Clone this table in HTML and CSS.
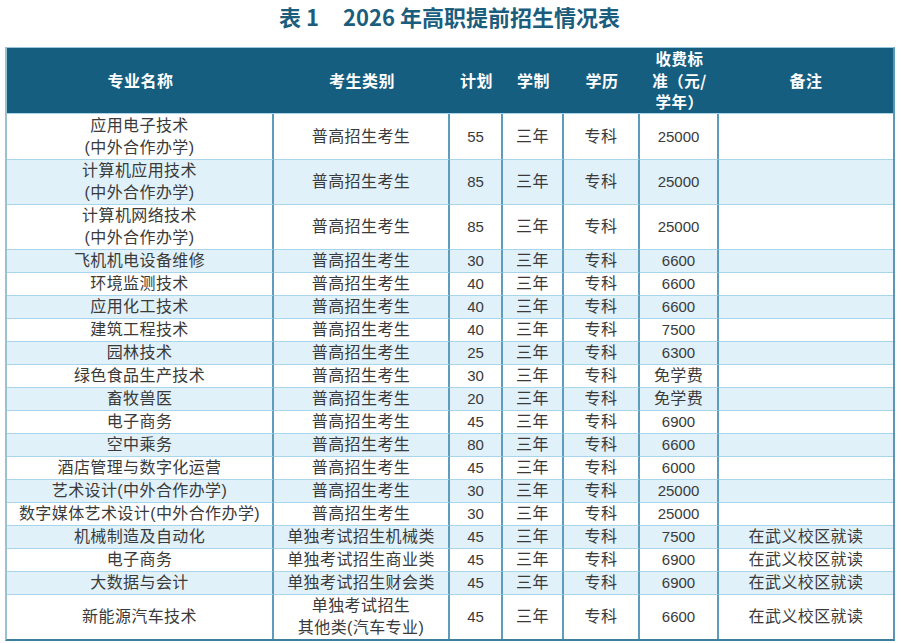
FILE: index.html
```html
<!DOCTYPE html>
<html lang="zh-CN">
<head>
<meta charset="utf-8">
<title>2026 年高职提前招生情况表</title>
<link rel="stylesheet" href="styles.css">
</head>
<body>
<h1 class="title">表 1<span class="gap"></span>2026 年高职提前招生情况表</h1>
<table class="plan">
  <thead>
    <tr class="head">
      <th class="c1">专业名称</th>
      <th class="c2">考生类别</th>
      <th class="c3">计划</th>
      <th class="c4">学制</th>
      <th class="c5">学历</th>
      <th class="c6 fee">收费标<br>准（元/<br>学年）</th>
      <th class="c7">备注</th>
    </tr>
  </thead>
  <tbody>
    <tr class="r46"><td>应用电子技术<br>(中外合作办学)</td><td>普高招生考生</td><td class="num">55</td><td>三年</td><td>专科</td><td class="num">25000</td><td></td></tr>
    <tr class="r45 alt"><td>计算机应用技术<br>(中外合作办学)</td><td>普高招生考生</td><td class="num">85</td><td>三年</td><td>专科</td><td class="num">25000</td><td></td></tr>
    <tr class="r44"><td>计算机网络技术<br>(中外合作办学)</td><td>普高招生考生</td><td class="num">85</td><td>三年</td><td>专科</td><td class="num">25000</td><td></td></tr>
    <tr class="r23 alt"><td>飞机机电设备维修</td><td>普高招生考生</td><td class="num">30</td><td>三年</td><td>专科</td><td class="num">6600</td><td></td></tr>
    <tr class="r23"><td>环境监测技术</td><td>普高招生考生</td><td class="num">40</td><td>三年</td><td>专科</td><td class="num">6600</td><td></td></tr>
    <tr class="r23 alt"><td>应用化工技术</td><td>普高招生考生</td><td class="num">40</td><td>三年</td><td>专科</td><td class="num">6600</td><td></td></tr>
    <tr class="r23"><td>建筑工程技术</td><td>普高招生考生</td><td class="num">40</td><td>三年</td><td>专科</td><td class="num">7500</td><td></td></tr>
    <tr class="r23 alt"><td>园林技术</td><td>普高招生考生</td><td class="num">25</td><td>三年</td><td>专科</td><td class="num">6300</td><td></td></tr>
    <tr class="r23"><td>绿色食品生产技术</td><td>普高招生考生</td><td class="num">30</td><td>三年</td><td>专科</td><td>免学费</td><td></td></tr>
    <tr class="r23 alt"><td>畜牧兽医</td><td>普高招生考生</td><td class="num">20</td><td>三年</td><td>专科</td><td>免学费</td><td></td></tr>
    <tr class="r23"><td>电子商务</td><td>普高招生考生</td><td class="num">45</td><td>三年</td><td>专科</td><td class="num">6900</td><td></td></tr>
    <tr class="r23 alt"><td>空中乘务</td><td>普高招生考生</td><td class="num">80</td><td>三年</td><td>专科</td><td class="num">6600</td><td></td></tr>
    <tr class="r23"><td>酒店管理与数字化运营</td><td>普高招生考生</td><td class="num">45</td><td>三年</td><td>专科</td><td class="num">6000</td><td></td></tr>
    <tr class="r23 alt"><td>艺术设计(中外合作办学)</td><td>普高招生考生</td><td class="num">30</td><td>三年</td><td>专科</td><td class="num">25000</td><td></td></tr>
    <tr class="r23"><td>数字媒体艺术设计(中外合作办学)</td><td>普高招生考生</td><td class="num">30</td><td>三年</td><td>专科</td><td class="num">25000</td><td></td></tr>
    <tr class="r23 alt"><td>机械制造及自动化</td><td>单独考试招生机械类</td><td class="num">45</td><td>三年</td><td>专科</td><td class="num">7500</td><td>在武义校区就读</td></tr>
    <tr class="r23"><td>电子商务</td><td>单独考试招生商业类</td><td class="num">45</td><td>三年</td><td>专科</td><td class="num">6900</td><td>在武义校区就读</td></tr>
    <tr class="r23 alt"><td>大数据与会计</td><td>单独考试招生财会类</td><td class="num">45</td><td>三年</td><td>专科</td><td class="num">6900</td><td>在武义校区就读</td></tr>
    <tr class="r42 last"><td>新能源汽车技术</td><td>单独考试招生<br>其他类(汽车专业)</td><td class="num">45</td><td>三年</td><td>专科</td><td class="num">6600</td><td>在武义校区就读</td></tr>
  </tbody>
</table>
</body>
</html>
```
FILE: styles.css
```css
html, body {
  margin: 0;
  padding: 0;
  background: #ffffff;
}

body {
  font-family: "Liberation Sans", "Noto Sans CJK SC", sans-serif;
  color: #3a3a3a;
}

.title {
  margin: 0 0 15px 0;
  height: 32px;
  line-height: 32px;
  text-align: center;
  font-family: "Noto Sans CJK SC", sans-serif;
  font-size: 22px;
  font-weight: 700;
  color: #1b5d7d;
  padding-right: 2px;
}

.title .gap {
  display: inline-block;
  width: 24px;
}

.plan {
  margin-left: 5px;
  width: 890px;
  table-layout: fixed;
  border-collapse: separate;
  border-spacing: 0;
  border-top: 1px solid #9cc6dc;
  border-left: 2px solid #9dbfd0;
  border-right: 2px solid #5b96b3;
  border-bottom: 2px solid #3f7f9e;
}

.plan th,
.plan td {
  box-sizing: border-box;
  padding: 0;
  text-align: center;
  vertical-align: middle;
}

.plan th {
  background: #165e7f;
  color: #ffffff;
  font-family: "Noto Sans CJK SC", sans-serif;
  font-weight: 700;
  font-size: 16px;
  letter-spacing: 0.5px;
  line-height: 21px;
  border-bottom: 1px solid #a8d5ec;
}

.plan th.fee {
  font-size: 15.5px;
  line-height: 21.5px;
}

.head {
  height: 66px;
}

.c1 { width: 267px; }
.c2 { width: 176px; }
.c3 { width: 53px; }
.c4 { width: 61px; }
.c5 { width: 76px; }
.c6 { width: 79px; }
.c7 { width: 174px; }

.plan td {
  font-size: 16px;
  letter-spacing: 0.4px;
  line-height: 22px;
  border-right: 2px solid #5f9cbb;
  border-bottom: 1px solid #a8d5ec;
  white-space: nowrap;
}

.plan td:last-child {
  border-right: none;
}

.plan td.num {
  font-size: 15px;
  letter-spacing: 0;
}

.alt td {
  background: #e1f1fa;
}

.last td {
  border-bottom: none;
}

.r46 { height: 46px; }
.r45 { height: 45px; }
.r44 { height: 44px; }
.r23 { height: 23px; }
.r42 { height: 42px; }
```
